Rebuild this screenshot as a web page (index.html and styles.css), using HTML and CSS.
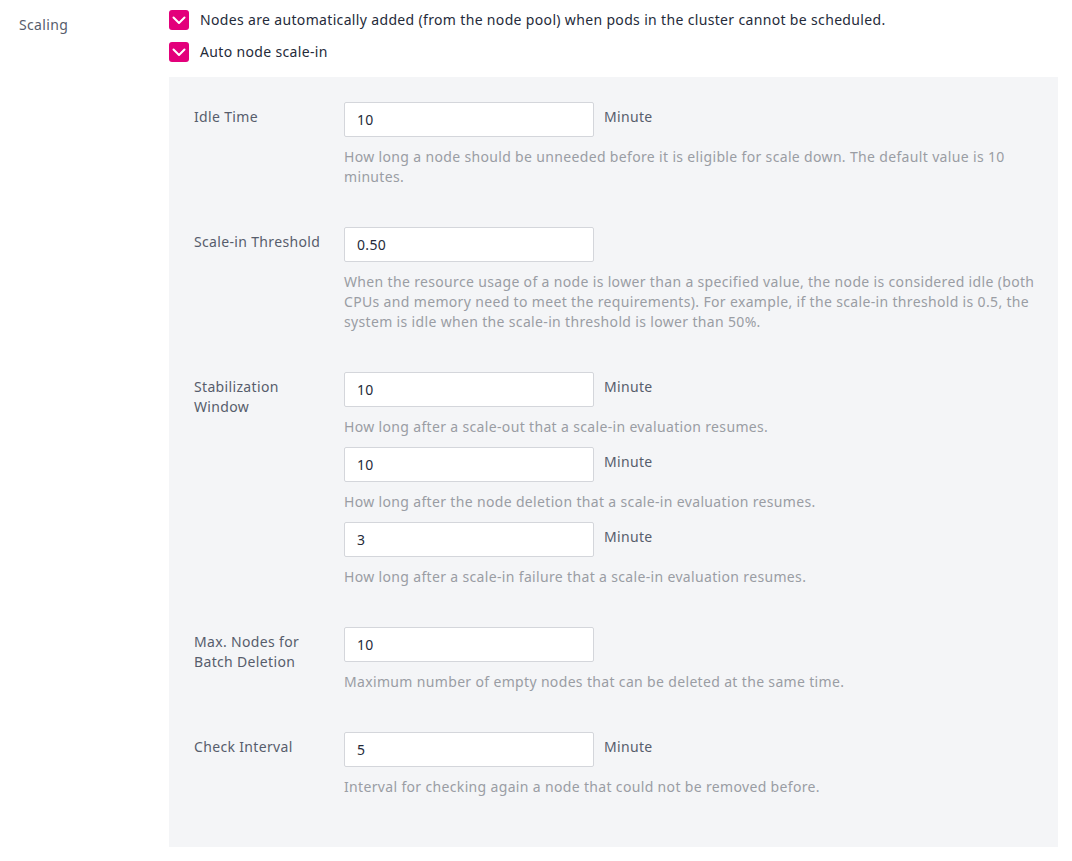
FILE: index.html
```html
<!DOCTYPE html>
<html>
<head>
<meta charset="utf-8">
<link rel="stylesheet" href="styles.css">
</head>
<body>
<div class="section">
  <div class="section-label">Scaling</div>
  <div class="section-body">
    <div class="check-row">
      <span class="checkbox"><svg width="20" height="20" viewBox="0 0 20 20"><path d="M4.5 7.5 L10 13 L15.5 7.5" fill="none" stroke="#fff" stroke-width="2" stroke-linecap="round" stroke-linejoin="round"/></svg></span>
      <span class="check-text">Nodes are automatically added (from the node pool) when pods in the cluster cannot be scheduled.</span>
    </div>
    <div class="check-row">
      <span class="checkbox"><svg width="20" height="20" viewBox="0 0 20 20"><path d="M4.5 7.5 L10 13 L15.5 7.5" fill="none" stroke="#fff" stroke-width="2" stroke-linecap="round" stroke-linejoin="round"/></svg></span>
      <span class="check-text">Auto node scale-in</span>
    </div>
    <div class="panel">
      <div class="field">
        <div class="field-label">Idle Time</div>
        <div class="field-control">
          <div class="input-row"><div class="input">10</div><span class="unit">Minute</span></div>
          <div class="help">How long a node should be unneeded before it is eligible for scale down. The default value is 10 minutes.</div>
        </div>
      </div>
      <div class="field">
        <div class="field-label">Scale-in Threshold</div>
        <div class="field-control">
          <div class="input-row"><div class="input">0.50</div></div>
          <div class="help">When the resource usage of a node is lower than a specified value, the node is considered idle (both CPUs and memory need to meet the requirements). For example, if the scale-in threshold is 0.5, the system is idle when the scale-in threshold is lower than 50%.</div>
        </div>
      </div>
      <div class="field">
        <div class="field-label">Stabilization Window</div>
        <div class="field-control">
          <div class="input-row"><div class="input">10</div><span class="unit">Minute</span></div>
          <div class="help">How long after a scale-out that a scale-in evaluation resumes.</div>
          <div class="input-row sub"><div class="input">10</div><span class="unit">Minute</span></div>
          <div class="help">How long after the node deletion that a scale-in evaluation resumes.</div>
          <div class="input-row sub"><div class="input">3</div><span class="unit">Minute</span></div>
          <div class="help">How long after a scale-in failure that a scale-in evaluation resumes.</div>
        </div>
      </div>
      <div class="field">
        <div class="field-label">Max. Nodes for Batch Deletion</div>
        <div class="field-control">
          <div class="input-row"><div class="input">10</div></div>
          <div class="help">Maximum number of empty nodes that can be deleted at the same time.</div>
        </div>
      </div>
      <div class="field">
        <div class="field-label">Check Interval</div>
        <div class="field-control">
          <div class="input-row"><div class="input">5</div><span class="unit">Minute</span></div>
          <div class="help">Interval for checking again a node that could not be removed before.</div>
        </div>
      </div>
    </div>
  </div>
</div>
</body>
</html>
```

FILE: styles.css
```css
* { box-sizing: border-box; }
html, body {
  margin: 0;
  padding: 0;
  background: #fff;
  font-family: "Noto Sans", "Open Sans", sans-serif;
  font-size: 14px;
  line-height: 20px;
  letter-spacing: 0.34px;
  color: #252b3a;
}
.section {
  display: flex;
  padding: 10px 0 0 19px;
}
.section-label {
  width: 150px;
  flex: none;
  color: #575d6c;
  padding-top: 5px;
}
.section-body {
  width: 889px;
}
.check-row {
  display: flex;
  align-items: center;
  height: 20px;
  margin-bottom: 12px;
}
.check-row:nth-child(2) { margin-bottom: 15px; }
.checkbox {
  width: 20px;
  height: 20px;
  border-radius: 3px;
  background: #e3007b;
  display: inline-flex;
  flex: none;
}
.check-text {
  margin-left: 11px;
  color: #252b3a;
}
.panel {
  background: #f4f5f7;
  padding: 25px 16px 50px 25px;
  min-height: 770px;
}
.field {
  display: flex;
  margin-bottom: 40px;
}
.field:last-child { margin-bottom: 0; }
.field-label {
  width: 150px;
  flex: none;
  padding-top: 5px;
  padding-right: 20px;
  color: #575d6c;
}
.field-control {
  flex: 1;
}
.input-row {
  display: flex;
  align-items: flex-start;
}
.input-row.sub { margin-top: 10px; }
.input {
  width: 250px;
  height: 35px;
  background: #fff;
  border: 1px solid #d4d6db;
  border-radius: 2px;
  padding: 7px 12px;
  color: #252b3a;
}
.unit {
  margin-left: 10px;
  padding-top: 5px;
  color: #575d6c;
}
.help {
  margin-top: 10px;
  color: #9a9da4;
}
```
